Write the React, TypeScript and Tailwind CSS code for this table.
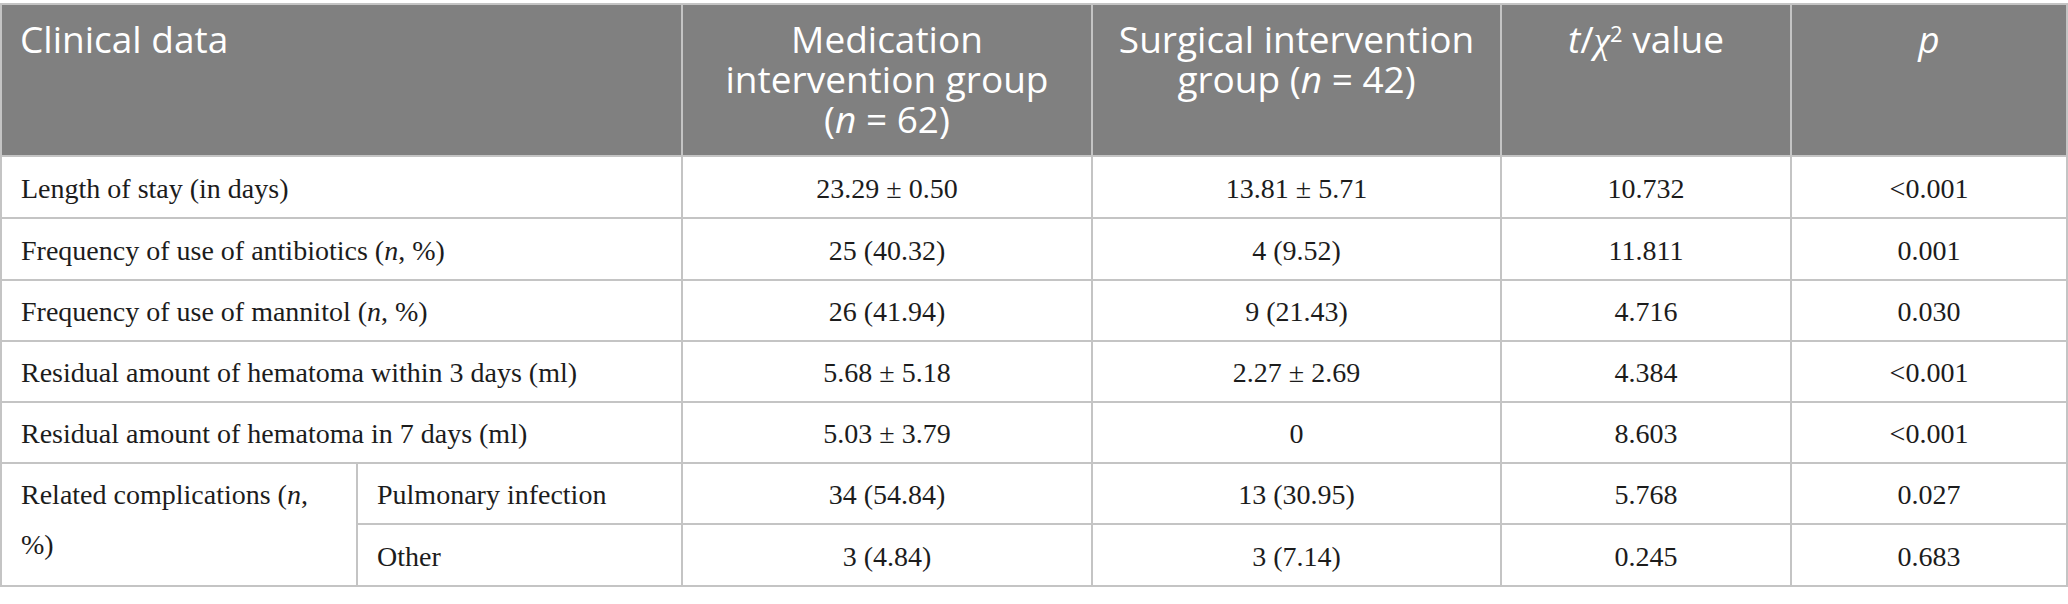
import type { ReactNode } from "react";

const line = "border-r-2 border-b-2 border-[#c4c4c4]";
const head = `${line} bg-[#808080] pt-[14px] px-[18px] align-top font-['Open_Sans',sans-serif] text-[37px] leading-[40px] font-normal text-white`;
const cell = `${line} pt-[3px] px-[19px] align-middle text-center font-['Liberation_Serif',serif] text-[28px] leading-[50px] text-[#1c1c1c]`;

interface Row {
  label: ReactNode;
  med: string;
  surg: string;
  stat: string;
  p: string;
  h: string;
}

const rows: Row[] = [
  { label: "Length of stay (in days)", med: "23.29 ± 0.50", surg: "13.81 ± 5.71", stat: "10.732", p: "<0.001", h: "h-[62px]" },
  {
    label: (
      <>
        Frequency of use of antibiotics (<i>n</i>, %)
      </>
    ),
    med: "25 (40.32)",
    surg: "4 (9.52)",
    stat: "11.811",
    p: "0.001",
    h: "h-[62px]",
  },
  {
    label: (
      <>
        Frequency of use of mannitol (<i>n</i>, %)
      </>
    ),
    med: "26 (41.94)",
    surg: "9 (21.43)",
    stat: "4.716",
    p: "0.030",
    h: "h-[61px]",
  },
  { label: "Residual amount of hematoma within 3 days (ml)", med: "5.68 ± 5.18", surg: "2.27 ± 2.69", stat: "4.384", p: "<0.001", h: "h-[61px]" },
  { label: "Residual amount of hematoma in 7 days (ml)", med: "5.03 ± 3.79", surg: "0", stat: "8.603", p: "<0.001", h: "h-[61px]" },
];

export default function App() {
  return (
    <div className="h-[604px] w-[2068px] bg-white pt-[3px]">
      <table className="w-[2068px] table-fixed border-separate border-spacing-0 border-l-2 border-t-2 border-[#c4c4c4]">
        <colgroup>
          <col className="w-[356px]" />
          <col className="w-[325px]" />
          <col className="w-[410px]" />
          <col className="w-[409px]" />
          <col className="w-[290px]" />
          <col className="w-[276px]" />
        </colgroup>
        <thead>
          <tr>
            <th colSpan={2} className={`${head} h-[152px] text-left`}>
              Clinical data
            </th>
            <th className={`${head} text-center`}>
              Medication
              <br />
              intervention group
              <br />(<i>n</i> = 62)
            </th>
            <th className={`${head} text-center`}>
              Surgical intervention
              <br />
              group (<i>n</i> = 42)
            </th>
            <th className={`${head} text-center`}>
              <i>t</i>/<i className="font-['Liberation_Serif',serif]">χ</i>
              <sup className="text-[22px]">2</sup> value
            </th>
            <th className={`${head} text-center`}>
              <i>p</i>
            </th>
          </tr>
        </thead>
        <tbody>
          {rows.map((r, i) => (
            <tr key={i}>
              <td colSpan={2} className={`${cell} ${r.h} text-left`}>
                {r.label}
              </td>
              <td className={cell}>{r.med}</td>
              <td className={cell}>{r.surg}</td>
              <td className={cell}>{r.stat}</td>
              <td className={cell}>{r.p}</td>
            </tr>
          ))}
          <tr>
            <td rowSpan={2} className={`${line} pt-[6px] px-[19px] align-top text-left font-['Liberation_Serif',serif] text-[28px] leading-[50px] text-[#1c1c1c]`}>
              Related complications (<i>n</i>, %)
            </td>
            <td className={`${cell} h-[61px] text-left`}>Pulmonary infection</td>
            <td className={cell}>34 (54.84)</td>
            <td className={cell}>13 (30.95)</td>
            <td className={cell}>5.768</td>
            <td className={cell}>0.027</td>
          </tr>
          <tr>
            <td className={`${cell} h-[62px] text-left`}>Other</td>
            <td className={cell}>3 (4.84)</td>
            <td className={cell}>3 (7.14)</td>
            <td className={cell}>0.245</td>
            <td className={cell}>0.683</td>
          </tr>
        </tbody>
      </table>
    </div>
  );
}
